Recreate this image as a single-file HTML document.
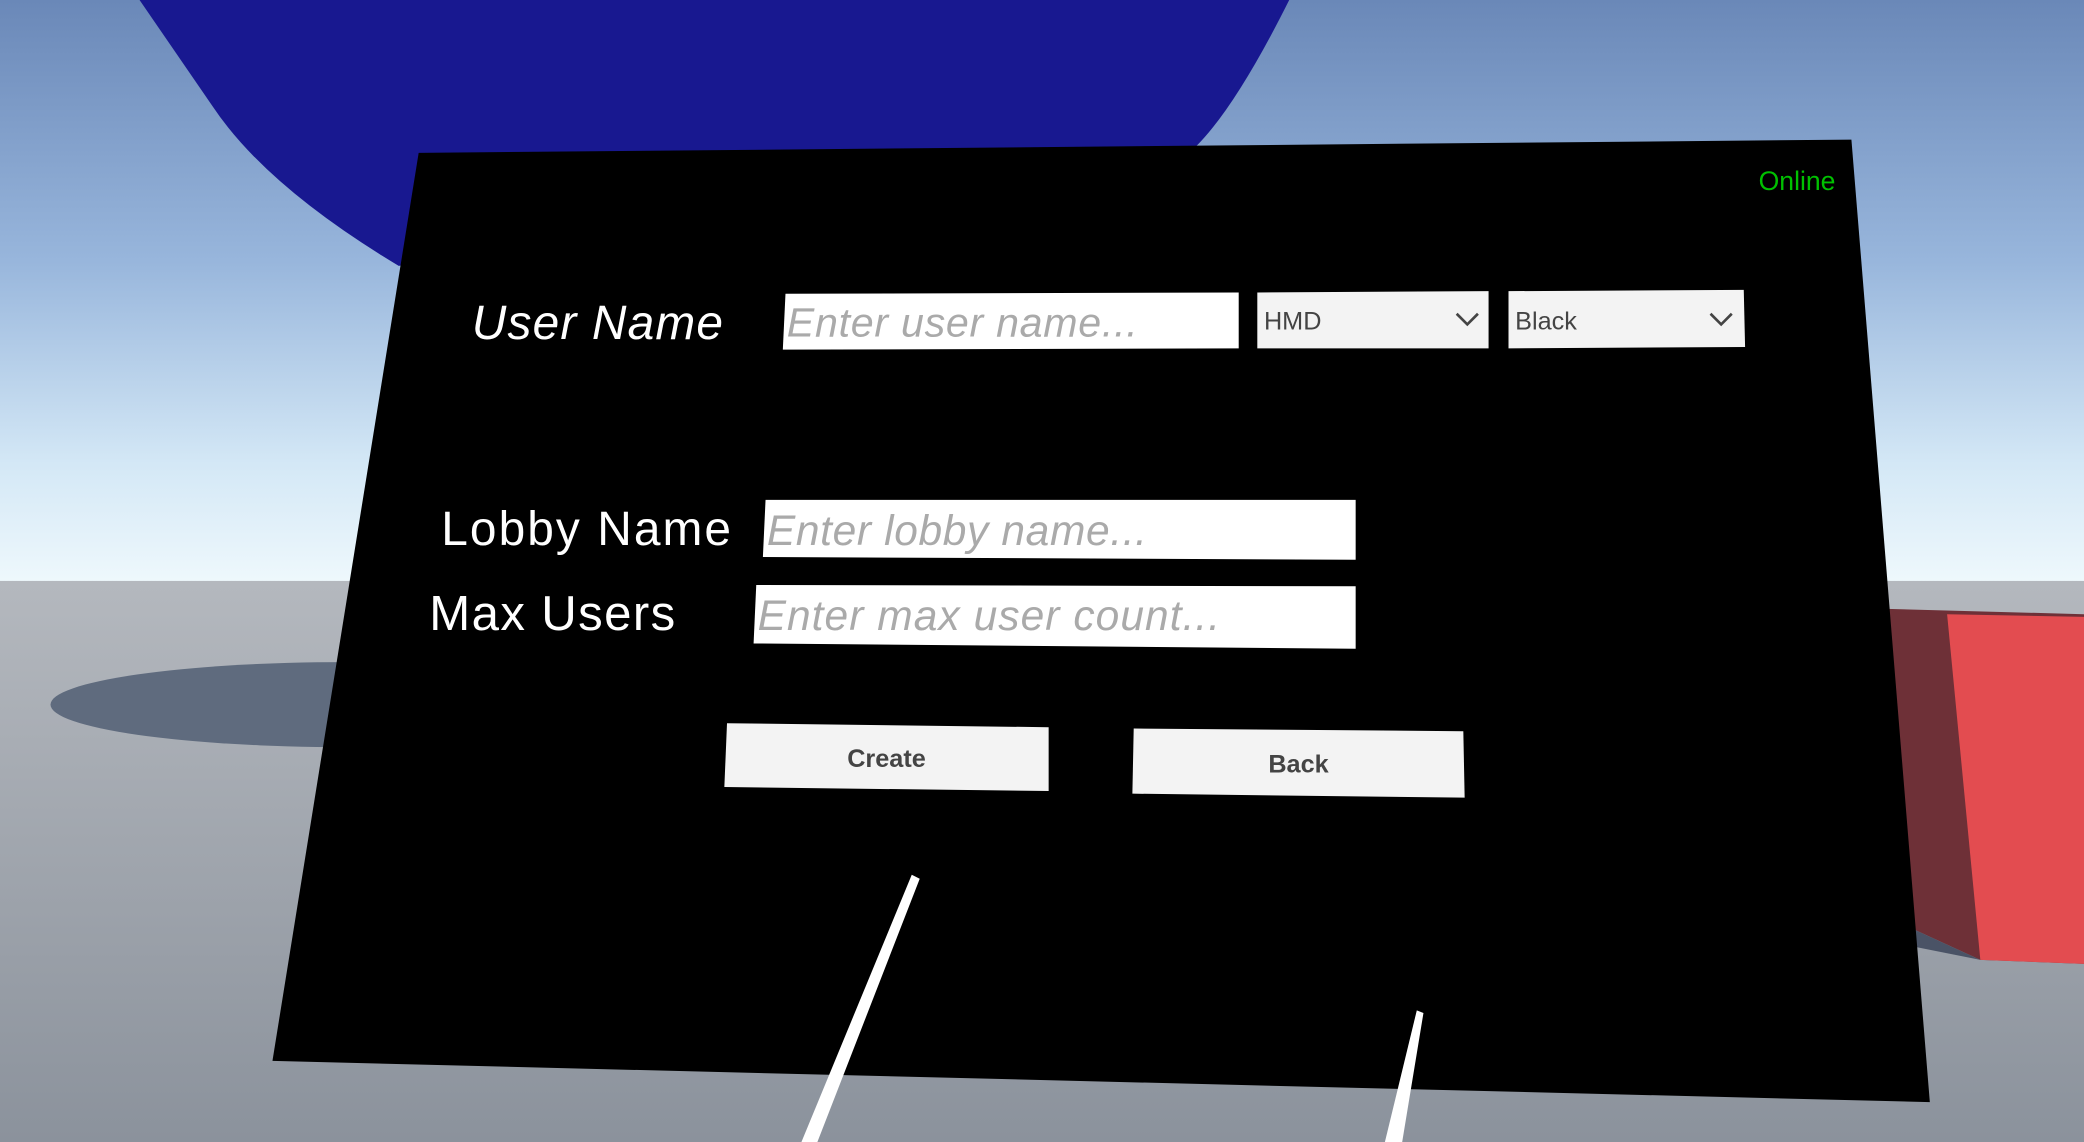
<!DOCTYPE html>
<html><head><meta charset="utf-8"><style>
html,body{margin:0;padding:0;width:2084px;height:1142px;overflow:hidden;background:#8a94a4}
svg{display:block}
text{font-family:"Liberation Sans",sans-serif}
</style></head><body>
<svg width="2084" height="1142" viewBox="0 0 1568 859" preserveAspectRatio="none" xmlns="http://www.w3.org/2000/svg">
<defs>
<linearGradient id="sky" x1="0" y1="0" x2="0" y2="1">
<stop offset="0" stop-color="#6a88b8"/>
<stop offset="0.45" stop-color="#98b6dc"/>
<stop offset="0.8" stop-color="#d4e8f6"/>
<stop offset="1" stop-color="#eef8fc"/>
</linearGradient>
<linearGradient id="gnd" x1="0" y1="0" x2="0" y2="1">
<stop offset="0" stop-color="#b4b8be"/>
<stop offset="1" stop-color="#8b929c"/>
</linearGradient>
</defs>
<rect x="0" y="0" width="1568" height="437" fill="url(#sky)"/>
<rect x="0" y="437" width="1568" height="422" fill="url(#gnd)"/>
<ellipse cx="260" cy="530" rx="222" ry="32" fill="#5f6b7e"/>
<path d="M105 0 L970 0 Q930 80 900 110 L300 200 Q200 140 160 80 Z" fill="#181890"/>
<polygon points="1420,458 1568,462 1568,725 1490,722 1420,690" fill="#6e3037"/>
<polygon points="1465,462 1568,464 1568,725 1490,722" fill="#e34c50"/>
<polygon points="1420,690 1490,722 1440,712" fill="#4a5366"/>
<polygon points="315,115 1393,105 1452,829 205,798" fill="#000"/>
<text x="1381" y="143" font-size="20" fill="#00c000" text-anchor="end">Online</text>
<text x="355" y="255" font-size="36" font-style="italic" fill="#fff" textLength="189">User Name</text>
<polygon points="591,221 932,220 932,262 589,263" fill="#fff"/>
<text x="592" y="253" font-size="31" font-style="italic" fill="#aaa" textLength="264">Enter user name...</text>
<polygon points="946,220 1120,219 1120,262 946,262" fill="#f3f3f3"/>
<text x="951" y="248" font-size="19" fill="#444">HMD</text>
<path d="M1096 236 L1104 244 L1112 236" stroke="#444" stroke-width="2" fill="none"/>
<polygon points="1135,219 1312,218 1313,261 1135,262" fill="#f3f3f3"/>
<text x="1140" y="248" font-size="19" fill="#444">Black</text>
<path d="M1287 236 L1295 244 L1303 236" stroke="#444" stroke-width="2" fill="none"/>
<text x="332" y="410" font-size="36" fill="#fff" textLength="218">Lobby Name</text>
<polygon points="576,376 1020,376 1020,421 574,419" fill="#fff"/>
<text x="577" y="410" font-size="32" font-style="italic" fill="#aaa" textLength="286">Enter lobby name...</text>
<text x="323" y="474" font-size="37" fill="#fff" textLength="185">Max Users</text>
<polygon points="569,440 1020,441 1020,488 567,484" fill="#fff"/>
<text x="570" y="474" font-size="32" font-style="italic" fill="#aaa" textLength="348">Enter max user count...</text>
<polygon points="547,544 789,547 789,595 545,592" fill="#f3f3f3"/>
<text x="667" y="577" font-size="19" font-weight="bold" fill="#444" text-anchor="middle">Create</text>
<polygon points="853,548 1101,550 1102,600 852,597" fill="#f3f3f3"/>
<text x="977" y="581" font-size="19" font-weight="bold" fill="#444" text-anchor="middle">Back</text>
<polygon points="686,658 692,661 615,859 603,859" fill="#fff"/>
<polygon points="1066,760 1071,762 1055,859 1042,859" fill="#fff"/>
</svg>
</body></html>
